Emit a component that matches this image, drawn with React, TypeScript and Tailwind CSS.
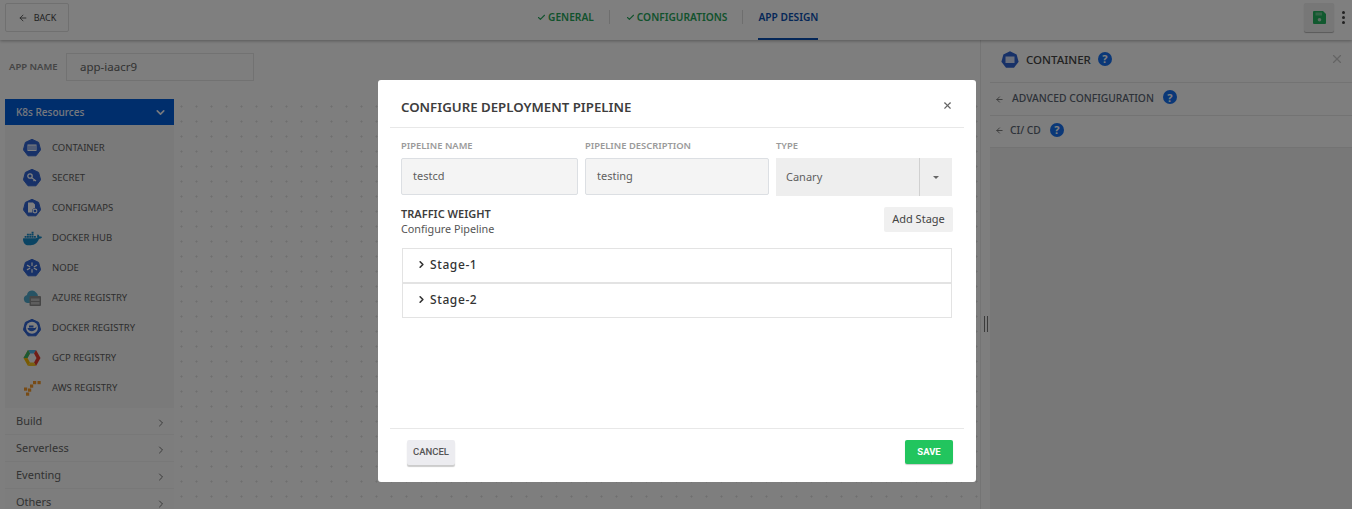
import React from "react";
import { ArrowLeft, Check, ChevronDown, ChevronRight, X } from "lucide-react";
import { SiDocker } from "react-icons/si";

const HEPT = "M9 0.3 L15.6 3.4 L17.6 10.8 L13 16.8 L5 16.8 L0.4 10.8 L2.4 3.4 Z";

function Hept({ children }: { children?: React.ReactNode }) {
  return (
    <svg width="18" height="18" viewBox="0 0 18 18" className="shrink-0">
      <path d={HEPT} fill="#2f62d0" stroke="#2f62d0" strokeWidth="1" strokeLinejoin="round" />
      {children}
    </svg>
  );
}

const ContainerGlyph = () => (
  <Hept>
    <rect x="4.5" y="5.5" width="9" height="6.5" fill="#fff" />
    <path d="M6 6.5v4.5M8 6.5v4.5M10 6.5v4.5M12 6.5v4.5" stroke="#2f62d0" strokeWidth="0.9" />
  </Hept>
);
const SecretGlyph = () => (
  <Hept>
    <circle cx="7" cy="7" r="2.2" fill="none" stroke="#fff" strokeWidth="1.3" />
    <path d="M8.6 8.6L13 12M11.5 10.8l-1 1.2" stroke="#fff" strokeWidth="1.2" fill="none" />
  </Hept>
);
const ConfigGlyph = () => (
  <Hept>
    <path d="M5 3.5h5l2 2v3.5a3 3 0 0 0-2.5 4.5H5z" fill="#fff" />
    <circle cx="12" cy="12" r="1.9" fill="none" stroke="#fff" strokeWidth="1.1" />
  </Hept>
);
const NodeGlyph = () => (
  <Hept>
    <g stroke="#fff" strokeWidth="1.2" strokeLinecap="round">
      <path d="M9 3.8v2.6M9 10.6v2.6M4.4 6.4l2.4 1.3M11.2 9.3l2.4 1.3M13.6 6.4l-2.4 1.3M6.8 9.3l-2.4 1.3" />
    </g>
  </Hept>
);
const DockerRegGlyph = () => (
  <Hept>
    <circle cx="9" cy="8.8" r="6" fill="#fff" />
    <path d="M4.5 9h7.6c.6-.4 1-.9 1.2-1.4.5 1.6-1 4.6-4.5 4.6-2.5 0-4-1.4-4.3-3.2z" fill="#2f62d0" />
    <rect x="6" y="6.5" width="4.5" height="2" fill="#2f62d0" />
  </Hept>
);
const AzureGlyph = () => (
  <svg width="19" height="18" viewBox="0 0 19 18" className="shrink-0">
    <path d="M1 11a4 4 0 0 1 3-5 5 5 0 0 1 9-2.5A4 4 0 0 1 14 9v5H4a3.5 3.5 0 0 1-3-3z" fill="#4ea6c9" />
    <rect x="6.5" y="7" width="11.5" height="10" rx="1" fill="#8d8d8d" />
    <rect x="8" y="9.5" width="8.5" height="2.5" fill="#bdbdbd" />
    <rect x="8" y="13" width="8.5" height="2.5" fill="#bdbdbd" />
  </svg>
);
const GcpGlyph = () => (
  <svg width="18" height="18" viewBox="0 0 18 18" className="shrink-0">
    <path d="M5 1h8l-2 3.5H7z" fill="#4bb3e8" />
    <path d="M13 1l4.5 8-4.5 8-2-3.5L13.5 9 11 4.5z" fill="#e03a2f" />
    <path d="M13 17H5l2-3.5h4z" fill="#f5c021" />
    <path d="M5 17L.5 9 5 1l2 3.5L4.500 9 7 13.500z" fill="#f2b705" />
    <path d="M5 1l2 3.5L4.5 9H.5z" fill="#38b26a" />
  </svg>
);
const AwsGlyph = () => (
  <svg width="19" height="17" viewBox="0 0 19 17" className="shrink-0">
    <g fill="#f0962a">
      <rect x="10" y="1" width="3.2" height="3.2" />
      <rect x="14.5" y="1" width="3.2" height="3.2" />
      <rect x="7" y="4.5" width="3.2" height="3.2" />
      <rect x="1" y="7.5" width="3.2" height="3.2" />
      <rect x="5" y="8.5" width="3.2" height="3.2" />
      <rect x="3" y="12.5" width="3.2" height="3.2" />
    </g>
  </svg>
);
const FloppyIcon = () => (
  <svg width="13" height="13" viewBox="0 0 13 13">
    <path d="M1 0h9l3 3v9a1 1 0 0 1-1 1H1a1 1 0 0 1-1-1V1a1 1 0 0 1 1-1z" fill="#22b35e" />
    <rect x="2.5" y="1.5" width="6.5" height="3" fill="#f0f0f0" fillOpacity="0.35" />
    <circle cx="6.5" cy="8.8" r="1.8" fill="#eeeeee" fillOpacity="0.75" />
  </svg>
);

const resources: { label: string; icon: React.ReactNode }[] = [
  { label: "CONTAINER", icon: <ContainerGlyph /> },
  { label: "SECRET", icon: <SecretGlyph /> },
  { label: "CONFIGMAPS", icon: <ConfigGlyph /> },
  { label: "DOCKER HUB", icon: <SiDocker className="shrink-0 text-[#1488c6]" size={19} /> },
  { label: "NODE", icon: <NodeGlyph /> },
  { label: "AZURE REGISTRY", icon: <AzureGlyph /> },
  { label: "DOCKER REGISTRY", icon: <DockerRegGlyph /> },
  { label: "GCP REGISTRY", icon: <GcpGlyph /> },
  { label: "AWS REGISTRY", icon: <AwsGlyph /> },
];

const Help = () => (
  <span className="flex h-[14px] w-[14px] items-center justify-center rounded-full bg-[#1670f0] text-[11px] leading-none font-bold text-white">?</span>
);

function Field({ label, value, className }: { label: string; value: string; className: string }) {
  return (
    <div className={className}>
      <div className="h-[20px] pt-[1px] text-[9.4px] leading-[14px] font-semibold text-[#9a9a9a]">{label}</div>
      <div className="flex h-[37px] items-center rounded-[2px] border border-[#dcdfe3] bg-[#f4f4f4] pl-[11px] text-[11px] text-[#5f5f5f]">{value}</div>
    </div>
  );
}

function Stage({ name }: { name: string }) {
  return (
    <div className="flex h-[35px] items-center gap-[3px] border border-[#e3e3e3] pb-[2px] pl-[13px] text-[12px] font-medium tracking-[0.6px] text-[#333]">
      <ChevronRight size={11} strokeWidth={3.5} className="text-[#333]" />
      {name}
    </div>
  );
}

export default function App() {
  return (
    <div className="relative flex h-[509px] w-full flex-col overflow-hidden bg-[#fcfcfc] font-['Noto_Sans','Open_Sans',sans-serif]">
      {/* top bar */}
      <header className="relative z-10 flex h-[40px] shrink-0 items-start bg-[#ffffff] pt-[3px] pr-[7px] pl-[5px] shadow-[0_1px_3px_rgba(0,0,0,0.3)]">
        <button className="flex h-[29px] w-[64px] items-center justify-center gap-[6px] rounded-[2px] border border-[#e0e0e0] text-[9px] text-[#444]">
          <ArrowLeft size={10} /> BACK
        </button>
        <nav className="-mt-[3px] ml-[468px] flex h-[40px] items-start text-[10.2px] font-semibold">
          <span className="mt-[10px] flex items-center gap-[2px] border-r border-[#ddd] pr-[15px] leading-[14px] text-[#25a55a]">
            <Check size={9} strokeWidth={3} /> GENERAL
          </span>
          <span className="mt-[10px] ml-[16px] flex items-center gap-[2px] border-r border-[#ddd] pr-[15px] leading-[14px] text-[#25a55a]">
            <Check size={9} strokeWidth={3} /> CONFIGURATIONS
          </span>
          <span className="ml-[15px] flex h-[40px] items-start border-b-2 border-[#0a4fb0] pt-[10px] leading-[14px] text-[#0a4fb0]">APP DESIGN</span>
        </nav>
        <div className="ml-auto flex items-center gap-[8px]">
          <span className="flex h-[29px] w-[30px] items-center justify-center rounded-[2px] bg-[#eeeeee] shadow-[0_1px_1px_rgba(0,0,0,0.3)]">
            <FloppyIcon />
          </span>
          <span className="flex flex-col gap-[2px]">
            <i className="block h-[3px] w-[3px] rounded-full bg-[#444]" />
            <i className="block h-[3px] w-[3px] rounded-full bg-[#444]" />
            <i className="block h-[3px] w-[3px] rounded-full bg-[#444]" />
          </span>
        </div>
      </header>

      <div className="flex min-h-0 flex-1">
        {/* left */}
        <main className="flex min-w-0 flex-1 flex-col">
          <div className="flex h-[59px] shrink-0 items-start pt-[13px] pl-[9px]">
            <span className="w-[57px] text-[9.5px] leading-[28px] font-semibold text-[#8a8a8a]">APP NAME</span>
            <span className="flex h-[28px] w-[188px] items-center border border-[#e4e4e4] pl-[13px] text-[11.5px] text-[#666]">app-iaacr9</span>
          </div>
          <div className="flex min-h-0 flex-1">
            <aside className="ml-[5px] w-[169px] shrink-0 overflow-hidden">
              <div className="flex h-[26px] items-center justify-between bg-[#005cd8] pr-[7px] pl-[11px] text-[10px] font-medium text-[#eef2fb]">
                K8s Resources
                <ChevronDown size={13} strokeWidth={3} />
              </div>
              <div className="flex h-[283px] flex-col bg-[#f4f4f4] pt-[8px]">
                {resources.map((r) => (
                  <div key={r.label} className="flex h-[30px] shrink-0 items-center pl-[18px]">
                    <span className="flex w-[29px] items-center">{r.icon}</span>
                    <span className="text-[9.5px] text-[#5c5c5c]">{r.label}</span>
                  </div>
                ))}
              </div>
              {["Build", "Serverless", "Eventing", "Others"].map((s) => (
                <div key={s} className="flex h-[27px] items-center justify-between border-b border-[#f0f0f0] bg-[#fafafa] pr-[7px] pl-[11px] text-[11px] text-[#666]">
                  {s}
                  <ChevronRight size={12} strokeWidth={2} className="mt-[3px] text-[#777]" />
                </div>
              ))}
            </aside>
            <section className="flex-1 bg-[radial-gradient(circle,#dedede_0.8px,transparent_1.3px)] bg-size-[15px_15px]" />
          </div>
        </main>

        {/* right panel */}
        <aside className="relative flex w-[372px] shrink-0 flex-col border-l border-[#e8e8e8] bg-[#fcfcfc] pl-[9px]">
          <span className="absolute top-[276px] left-[3px] h-[16px] w-[4px] border-x border-[#777]" />
          <div className="flex h-[43px] shrink-0 items-center border-b border-[#e6e6e6] pr-[8px] pb-[3px] pl-[11px]">
            <svg width="18" height="18" viewBox="0 0 18 18" className="shrink-0">
              <path d={HEPT} fill="#2f62d0" />
              <rect x="4.5" y="5.5" width="9" height="6.5" fill="#fff" fillOpacity="0.8" />
            </svg>
            <span className="ml-[7px] text-[11.5px] font-medium text-[#444]">CONTAINER</span>
            <span className="-mt-[2px] ml-[7px]"><Help /></span>
            <X size={14} className="-mt-[2px] ml-auto text-[#c8c8c8]" />
          </div>
          <div className="flex h-[33px] shrink-0 items-center border-b border-[#e6e6e6] pl-[5px] text-[10.3px] font-medium text-[#5a6472]">
            <ArrowLeft size={9} strokeWidth={2.5} className="mr-[8px] text-[#777]" />
            ADVANCED CONFIGURATION
            <span className="-mt-[4px] ml-[9px]"><Help /></span>
          </div>
          <div className="flex h-[32px] shrink-0 items-center border-b border-[#e6e6e6] pb-[2px] pl-[5px] text-[10.3px] font-medium text-[#5a6472]">
            <ArrowLeft size={9} strokeWidth={2.5} className="mr-[6px] text-[#777]" />
            CI/ CD
            <span className="-mt-[2px] ml-[9px]"><Help /></span>
          </div>
          <div className="flex-1 bg-[#f1f1f1]" />
        </aside>
      </div>

      {/* dim layer */}
      <div className="absolute inset-0 z-20 bg-black/50" />

      {/* modal */}
      <div className="absolute top-[80px] left-[378px] z-30 flex h-[402px] w-[598px] flex-col rounded-[3px] bg-white">
        <div className="mx-[12px] flex h-[48px] shrink-0 items-center justify-between border-b border-[#e8e8e8] pt-[9px] pr-[11px] pl-[11px]">
          <h2 className="text-[13.25px] leading-none font-semibold text-[#3d3d3d]">CONFIGURE DEPLOYMENT PIPELINE</h2>
          <X size={11} strokeWidth={2.5} className="mb-[5px] text-[#666]" />
        </div>
        <div className="flex-1 px-[23px] pt-[10px]">
          <div className="flex gap-[7px]">
            <Field label="PIPELINE NAME" value="testcd" className="w-[177px]" />
            <Field label="PIPELINE DESCRIPTION" value="testing" className="w-[184px]" />
            <div className="w-[176px]">
              <div className="h-[20px] pt-[1px] text-[9.4px] leading-[14px] font-semibold text-[#9a9a9a]">TYPE</div>
              <div className="flex h-[38px] items-center justify-between bg-[#eeeeee] text-[11px] text-[#5f5f5f]">
                <span className="pl-[10px]">Canary</span>
                <span className="flex h-full w-[33px] items-center justify-center border-l border-[#d0d0d0]">
                  <span className="h-0 w-0 border-x-[3px] border-t-[3px] border-x-transparent border-t-[#666]" />
                </span>
              </div>
            </div>
          </div>
          <div className="mt-[11px] flex items-start justify-between">
            <div className="-mt-[1px]">
              <div className="text-[11px] leading-[15px] font-semibold text-[#3d3d3d]">TRAFFIC WEIGHT</div>
              <div className="text-[10.8px] leading-[15px] text-[#555]">Configure Pipeline</div>
            </div>
            <button className="h-[25px] w-[69px] rounded-[2px] bg-[#f0f0f0] text-[11px] text-[#444]">Add Stage</button>
          </div>
          <div className="mt-[12px] ml-[1px] w-[550px]">
            <Stage name="Stage-1" />
            <Stage name="Stage-2" />
          </div>
        </div>
        <div className="mx-[12px] flex h-[54px] shrink-0 items-start justify-between border-t border-[#e8e8e8] pt-[11px] pr-[11px] pl-[17px]">
          <button className="h-[25px] w-[48px] rounded-[2px] bg-[#ececf0] font-['Roboto',sans-serif] text-[9.5px] font-medium text-[#555] shadow-[0_2px_1px_rgba(0,0,0,0.2)]">CANCEL</button>
          <button className="h-[24px] w-[48px] rounded-[2px] bg-[#22c55e] font-['Roboto',sans-serif] text-[9.5px] font-bold text-white shadow-[0_1px_1px_rgba(0,0,0,0.2)]">SAVE</button>
        </div>
      </div>
    </div>
  );
}
